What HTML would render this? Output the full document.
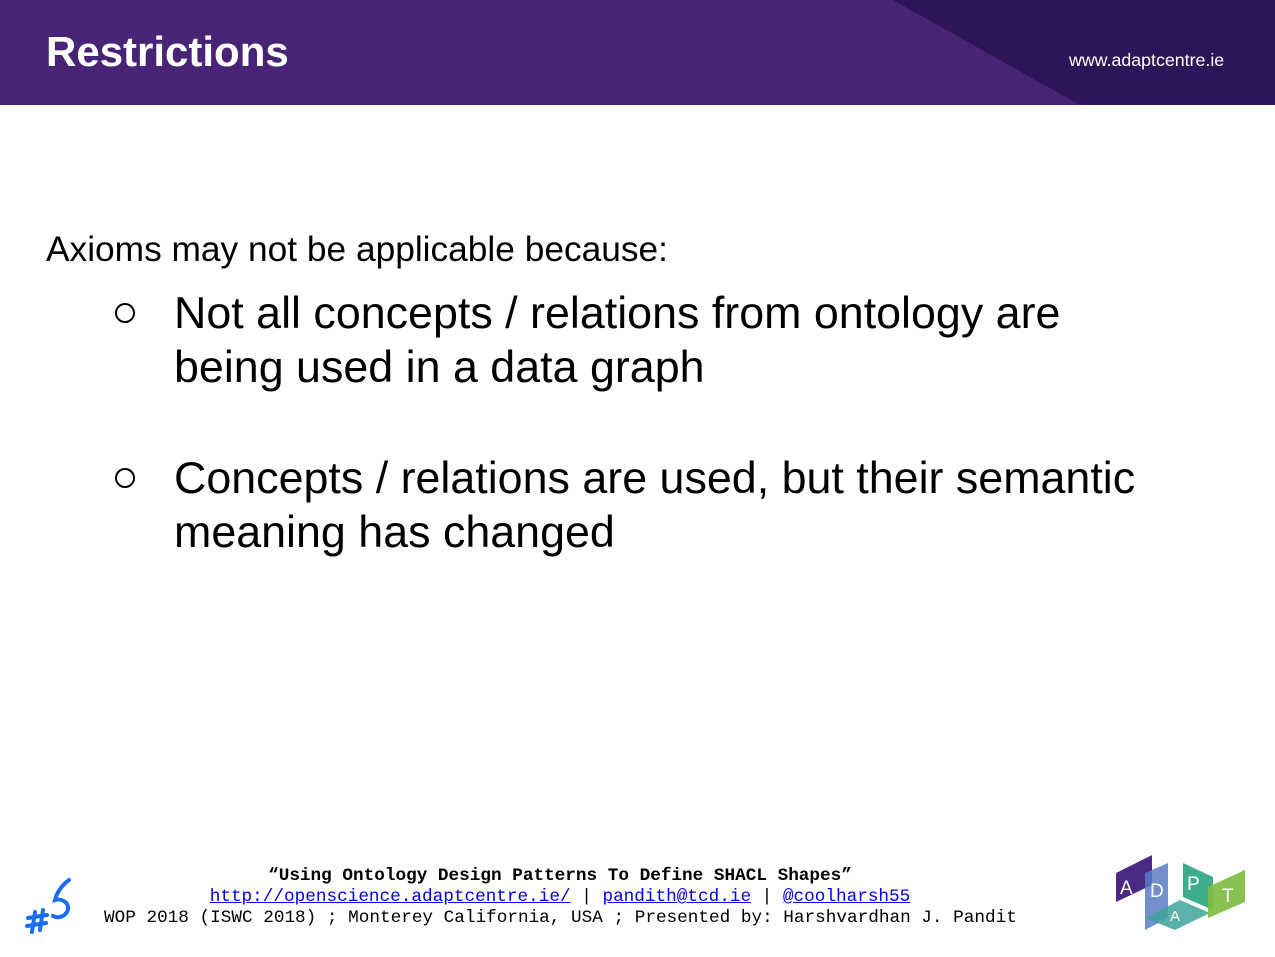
<!DOCTYPE html>
<html><head><meta charset="utf-8"><style>
*{margin:0;padding:0;box-sizing:border-box}
body{width:1275px;height:957px;background:#fff;position:relative;overflow:hidden;font-family:"Liberation Sans",Arial,sans-serif;color:#000}
.hdr{position:absolute;left:0;top:0;width:1275px;height:105px;background:#472475}
.t{position:absolute;left:46px;top:28px;font-size:42px;font-weight:bold;color:#fff}
.url{position:absolute;left:1069px;top:50px;font-size:17.8px;color:#fff}
.ax{position:absolute;left:46px;top:230px;font-size:35.3px;white-space:nowrap}
.b{position:absolute;left:174px;font-size:44.8px;line-height:54px;white-space:nowrap}
.bl{position:absolute;left:115px;width:20px;height:20px;border:2px solid #000;border-radius:50%}
.ft{position:absolute;left:0;width:1120px;text-align:center;font-family:"Liberation Mono",monospace;font-size:17.7px;white-space:nowrap;line-height:21px}
a{color:#00e;text-decoration:underline}
</style></head><body>
<div class="hdr"><svg width="1275" height="105" style="position:absolute;left:0;top:0"><polygon points="893,0 1275,0 1275,105 1080,105" fill="#2d1558"/></svg></div>
<div class="t">Restrictions</div>
<div class="url">www.adaptcentre.ie</div>
<div class="ax">Axioms may not be applicable because:</div>
<div class="bl" style="top:303px"></div>
<div class="b" style="top:286px">Not all concepts / relations from ontology are<br>being used in a data graph</div>
<div class="bl" style="top:468px"></div>
<div class="b" style="top:451px">Concepts / relations are used, but their semantic<br>meaning has changed</div>
<div class="ft" style="top:866px;font-weight:bold">“Using Ontology Design Patterns To Define SHACL Shapes”</div>
<div class="ft" style="top:887px"><a>http://openscience.adaptcentre.ie/</a> | <a>pandith@tcd.ie</a> | <a>@coolharsh55</a></div>
<div class="ft" style="top:908px;left:104px;width:auto;text-align:left">WOP 2018 (ISWC 2018) ; Monterey California, USA ; Presented by: Harshvardhan J. Pandit</div>
<svg style="position:absolute;left:25px;top:876px" width="50" height="60" viewBox="0 0 50 60" fill="none" stroke="#1a6cf0" stroke-width="4" stroke-linecap="round">
<path d="M10 36 L7 56 M18 34 L15 54 M3 42 L22 39 M2 50 L21 47"/>
<path d="M44 4 C36 10 32 16 30 24 C38 22 46 28 42 36 C38 42 32 42 28 40"/>
</svg>
<svg style="position:absolute;left:0;top:0;pointer-events:none" width="1275" height="957">
<polygon points="1116,873 1152,855 1152,885 1116,902" fill="#4b2a86"/>
<polygon points="1145,873 1168,863 1168,918 1145,930" fill="#5a7bc6" opacity="0.85"/>
<polygon points="1145,918 1175,930 1210,913 1180,900" fill="#3fa39a" opacity="0.85"/>
<polygon points="1183,863 1213,877 1213,910 1183,897" fill="#27a57f" opacity="0.9"/>
<polygon points="1208,887 1245,870 1245,902 1208,918" fill="#7dbb3f" opacity="0.9"/>
<text x="1120" y="894" font-family="Liberation Sans" font-size="19" fill="#fff">A</text>
<text x="1150" y="897" font-family="Liberation Sans" font-size="19" fill="#fff">D</text>
<text x="1187" y="890" font-family="Liberation Sans" font-size="19" fill="#fff">P</text>
<text x="1170" y="921" font-family="Liberation Sans" font-size="15" fill="#fff">A</text>
<text x="1222" y="902" font-family="Liberation Sans" font-size="19" fill="#fff">T</text>
</svg>
</body></html>
